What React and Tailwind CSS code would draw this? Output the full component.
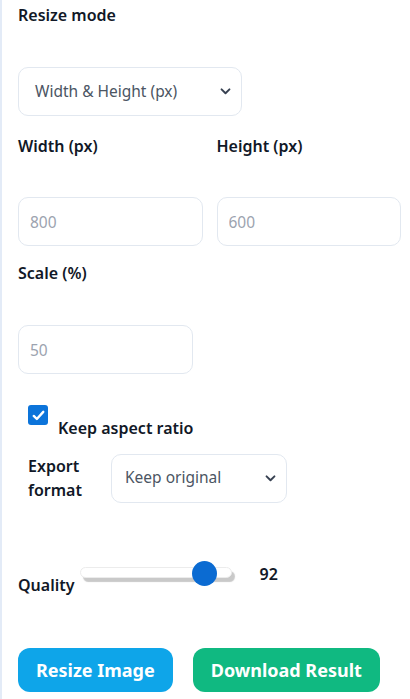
import React, { useState } from 'react'

const Label = ({ children, className = '' }) => (
  <label className={`block text-[16px] leading-[20px] font-semibold text-[#111827] ${className}`}>{children}</label>
)

const Chevron = () => (
  <svg viewBox="0 0 12 8" className="w-[11px] h-[7px]" fill="none" stroke="#374151" strokeWidth="2.2" strokeLinecap="round" strokeLinejoin="round">
    <path d="M1.5 1.5 6 6l4.5-4.5" />
  </svg>
)

const App = () => {
  const [keep, setKeep] = useState(true)
  const quality = 92

  return (
    <div className="min-h-screen bg-white border-l-2 border-[#e3ebf7] pl-[16px] pr-[9px] pt-[5px] font-['Noto_Sans','Open_Sans',sans-serif] text-[#111827]">
      <Label>Resize mode</Label>

      <div className="mt-[42px] flex items-center justify-between w-[224px] h-[49px] pl-[16px] pr-[10px] rounded-[10px] border border-[#e2e8f0] bg-white">
        <span className="text-[15.5px] text-[#4b5563]">Width &amp; Height (px)</span>
        <Chevron />
      </div>

      <div className="mt-[20px] grid grid-cols-2 gap-[14px]">
        <div>
          <Label>Width (px)</Label>
          <input placeholder="800" className="mt-[41px] w-full h-[49px] px-[11px] rounded-[10px] border border-[#e2e8f0] text-[15.5px] placeholder:text-[#9ca3af] outline-none" />
        </div>
        <div>
          <Label>Height (px)</Label>
          <input placeholder="600" className="mt-[41px] w-full h-[49px] px-[11px] rounded-[10px] border border-[#e2e8f0] text-[15.5px] placeholder:text-[#9ca3af] outline-none" />
        </div>
      </div>

      <Label className="mt-[17px]">Scale (%)</Label>
      <input placeholder="50" className="mt-[42px] block w-[175px] h-[49px] px-[11px] rounded-[10px] border border-[#e2e8f0] text-[15.5px] placeholder:text-[#9ca3af] outline-none" />

      <div className="pl-[10px]">
        <div className="mt-[31px] flex items-start">
          <button
            onClick={() => setKeep(!keep)}
            className={`w-[20px] h-[20px] rounded-[3px] flex items-center justify-center ${keep ? 'bg-[#0c74da]' : 'border-2 border-[#767676] bg-white'}`}
          >
            {keep && (
              <svg viewBox="0 0 14 12" className="w-[13px] h-[11px]" fill="none" stroke="white" strokeWidth="2.6" strokeLinecap="round" strokeLinejoin="round">
                <path d="M1.8 6.5 5.2 9.8 12.2 2" />
              </svg>
            )}
          </button>
          <span className="ml-[10px] mt-[12.5px] text-[16px] leading-[20px] font-semibold">Keep aspect ratio</span>
        </div>

        <div className="mt-[16px] flex items-start">
          <div className="w-[83px] text-[16px] leading-[24px] font-semibold">Export<br />format</div>
          <div className="flex items-center justify-between w-[176px] h-[49px] pl-[13px] pr-[10px] rounded-[10px] border border-[#e2e8f0] bg-white">
            <span className="text-[15.5px] text-[#4b5563]">Keep original</span>
            <Chevron />
          </div>
        </div>
      </div>

      <div className="mt-[58px] flex items-start">
        <span className="mt-[14.5px] text-[16px] leading-[20px] font-semibold">Quality</span>
        <div className="relative ml-[6px] w-[152px] h-[24px]">
          <div className="absolute left-0 right-0 top-[6px] h-[11px] rounded-full bg-white border border-[#ececec] shadow-[3px_4px_1px_#c9c9c9]" />
          <div className="absolute top-0 left-[112px] w-[25px] h-[25px] rounded-full bg-[#0b6bd2]" />
        </div>
        <span className="ml-[27px] mt-[3px] text-[16px] leading-[20px] font-semibold">{quality}</span>
      </div>

      <div className="mt-[53px] flex gap-[20px]">
        <button className="h-[44px] px-[18px] rounded-[12px] bg-[#0ea5e9] text-white text-[18px] font-bold">Resize Image</button>
        <button className="h-[44px] px-[18px] rounded-[12px] bg-[#10b981] text-white text-[18px] font-bold">Download Result</button>
      </div>
    </div>
  )
}

export default App
